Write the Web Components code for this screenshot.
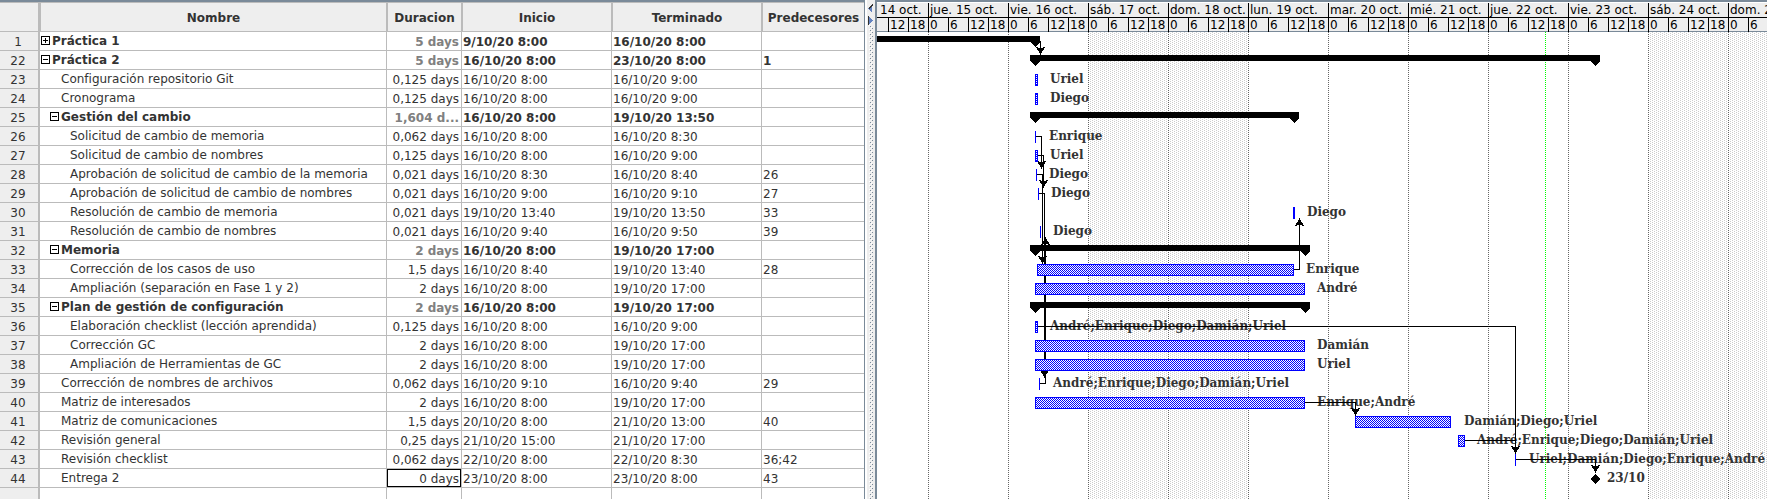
<!DOCTYPE html>
<html lang="es">
<head>
<meta charset="utf-8">
<meta name="viewport" content="width=device-width, initial-scale=1">
<title>Cronograma</title>
<style>
  html, body { margin: 0; height: 100%; }
  body { font: 12px/14px "DejaVu Sans", sans-serif; color: #333; background: #fff; overflow: hidden; }
</style>
</head>
<body>
<project-view>
  <task-sheet slot="sheet"></task-sheet>
  <gantt-chart slot="chart"></gantt-chart>
</project-view>

<script>
/* id, level, name, duration, start, end, predecessors, summary state */
const TASKS = [
  [1, 0, 'Práctica 1', '5 days', '9/10/20 8:00', '16/10/20 8:00', '', 'closed'],
  [22, 0, 'Práctica 2', '5 days', '16/10/20 8:00', '23/10/20 8:00', '1', 'open'],
  [23, 1, 'Configuración repositorio Git', '0,125 days', '16/10/20 8:00', '16/10/20 9:00', ''],
  [24, 1, 'Cronograma', '0,125 days', '16/10/20 8:00', '16/10/20 9:00', ''],
  [25, 1, 'Gestión del cambio', '1,604 d...', '16/10/20 8:00', '19/10/20 13:50', '', 'open'],
  [26, 2, 'Solicitud de cambio de memoria', '0,062 days', '16/10/20 8:00', '16/10/20 8:30', ''],
  [27, 2, 'Solicitud de cambio de nombres', '0,125 days', '16/10/20 8:00', '16/10/20 9:00', ''],
  [28, 2, 'Aprobación de solicitud de cambio de la memoria', '0,021 days', '16/10/20 8:30', '16/10/20 8:40', '26'],
  [29, 2, 'Aprobación de solicitud de cambio de nombres', '0,021 days', '16/10/20 9:00', '16/10/20 9:10', '27'],
  [30, 2, 'Resolución de cambio de memoria', '0,021 days', '19/10/20 13:40', '19/10/20 13:50', '33'],
  [31, 2, 'Resolución de cambio de nombres', '0,021 days', '16/10/20 9:40', '16/10/20 9:50', '39'],
  [32, 1, 'Memoria', '2 days', '16/10/20 8:00', '19/10/20 17:00', '', 'open'],
  [33, 2, 'Corrección de los casos de uso', '1,5 days', '16/10/20 8:40', '19/10/20 13:40', '28'],
  [34, 2, 'Ampliación (separación en Fase 1 y 2)', '2 days', '16/10/20 8:00', '19/10/20 17:00', ''],
  [35, 1, 'Plan de gestión de configuración', '2 days', '16/10/20 8:00', '19/10/20 17:00', '', 'open'],
  [36, 2, 'Elaboración checklist (lección aprendida)', '0,125 days', '16/10/20 8:00', '16/10/20 9:00', ''],
  [37, 2, 'Corrección GC', '2 days', '16/10/20 8:00', '19/10/20 17:00', ''],
  [38, 2, 'Ampliación de Herramientas de GC', '2 days', '16/10/20 8:00', '19/10/20 17:00', ''],
  [39, 1, 'Corrección de nombres de archivos', '0,062 days', '16/10/20 9:10', '16/10/20 9:40', '29'],
  [40, 1, 'Matriz de interesados', '2 days', '16/10/20 8:00', '19/10/20 17:00', ''],
  [41, 1, 'Matriz de comunicaciones', '1,5 days', '20/10/20 8:00', '21/10/20 13:00', '40'],
  [42, 1, 'Revisión general', '0,25 days', '21/10/20 15:00', '21/10/20 17:00', ''],
  [43, 1, 'Revisión checklist', '0,062 days', '22/10/20 8:00', '22/10/20 8:30', '36;42'],
  [44, 1, 'Entrega 2', '0 days', '23/10/20 8:00', '23/10/20 8:00', '43']
];
const ROW = 19;
const rowOf = id => TASKS.findIndex(t => t[0] === id);

function mount(el, html) {
  const root = el.shadowRoot || el.attachShadow({ mode: 'open' });
  const t = document.createElement('template');
  t.innerHTML = html;
  root.replaceChildren(t.content.cloneNode(true));
  return root;
}

customElements.define('tree-toggle', class extends HTMLElement {
  connectedCallback() {
    const open = this.hasAttribute('open');
    mount(this, `
      <style>
        :host { display: block; width: 9px; height: 9px; }
        button { display: block; width: 9px; height: 9px; padding: 0; border: 0; background: none; }
        svg { display: block; }
      </style>
      <button type="button" aria-expanded="${open}">
        <svg width="9" height="9" shape-rendering="crispEdges" fill="none" stroke="#000">
          <path d="M.5 .5h8v8h-8zM2 4.5h5${open ? '' : 'M4.5 2v5'}"/>
        </svg>
      </button>`);
  }
});

customElements.define('task-name', class extends HTMLElement {
  connectedCallback() {
    mount(this, `
      <style>
        :host { display: flex; align-items: flex-start; gap: 2px; height: 16px; padding-top: 2px;
                padding-left: calc(var(--level, 0) * 9px + 1px); }
        :host([leaf]) { padding-left: calc(var(--level, 0) * 9px + 12px); }
        ::slotted(tree-toggle) { margin-top: 2px; }
      </style>
      <slot name="toggle"></slot><span><slot></slot></span>`);
  }
});

customElements.define('task-sheet', class extends HTMLElement {
  connectedCallback() {
    const rows = TASKS.map(([id, lv, name, dur, a, b, pred, sum]) => `
      <tr class="${sum ? 'sum' : ''}">
        <th scope="row">${id}</th>
        <td><task-name style="--level:${lv}" ${sum ? '' : 'leaf'}>${
          sum ? `<tree-toggle slot="toggle" ${sum === 'open' ? 'open' : ''}></tree-toggle>` : ''}${name}</task-name></td>
        <td class="dur${id === 44 ? ' sel' : ''}">${dur}</td><td>${a}</td><td>${b}</td><td>${pred}</td>
      </tr>`).join('');
    mount(this, `
      <style>
        :host { display: block; height: 100%; }
        table { table-layout: fixed; width: 864px; height: 100%; border-spacing: 0; }
        .id { width: 40px; } .name { width: 347px; } .d { width: 75px; } .date { width: 150px; } .pred { width: 102px; }
        th, td { box-sizing: border-box; height: 19px; padding: 0; white-space: nowrap; overflow: hidden;
                 border-bottom: 1px solid #bbb; border-right: 1px solid #bbb; }
        td { text-align: left; padding: 2px 0 0 1px; }
        td:nth-child(2) { padding: 0; }
        th:last-child, td:last-child { border-right: 0; }
        thead th { height: 30px; padding-top: 1px; background: #eee; border-top: 1px solid #bbb; border-left: 1px solid #bbb; }
        thead th:first-child { border-left: 0; }
        th:first-child { border-right: 2px solid #bbb; background: #eee; }
        tbody th { font-weight: normal; padding: 2px 2px 0 0; }
        .sum td { font-weight: bold; }
        .dur { text-align: right; padding-right: 2px; }
        .sum .dur { color: #808080; }
        .sel { box-shadow: inset 0 0 0 1px #000; }
        .rest th, .rest td { height: auto; border-bottom: 0; }
        .rest { height: 100%; }
      </style>
      <table>
        <colgroup><col class="id"><col class="name"><col class="d"><col class="date"><col class="date"><col class="pred"></colgroup>
        <thead><tr><th></th><th scope="col">Nombre</th><th scope="col">Duracion</th><th scope="col">Inicio</th><th scope="col">Terminado</th><th scope="col">Predecesores</th></tr></thead>
        <tbody>${rows}<tr class="rest"><th></th><td></td><td></td><td></td><td></td><td></td></tr></tbody>
      </table>`);
  }
});

customElements.define('split-divider', class extends HTMLElement {
  connectedCallback() {
    mount(this, `
      <style>
        :host { display: flex; flex-direction: column; box-sizing: border-box; width: 13px; padding-left: 2px;
                border-left: 1px solid #7a8a99; border-right: 2px solid #7a8a99; background: #fff; }
        svg { display: block; flex: none; background: #eee; }
        svg.bumps { flex: 1; min-height: 0; }
      </style>
      <svg width="8" height="25" fill="#6382bf" shape-rendering="crispEdges">
        <path d="M5 4v9L1 8.500z"/><path d="M5 4h1v2H5zM4 5h1v2H4zM3 6h1v2H3zM2 7h1v2H2z" fill="#333"/>
        <path d="M1 16v9l5-4.500z"/><path d="M1 16h1v9H1z" fill="#333"/>
      </svg>
      <svg class="bumps" width="8">
        <defs><pattern id="b" width="4" height="4" patternUnits="userSpaceOnUse" shape-rendering="crispEdges">
          <path d="M2 0h1v1H2zM0 2h1v1H0z" fill="#fff"/><path d="M3 1h1v1H3zM1 3h1v1H1z" fill="#7a8a99"/>
        </pattern></defs>
        <rect x="2" width="4" height="100%" fill="url(#b)"/>
      </svg>`);
  }
});

/* The time scale starts on Wednesday 14 October; a day takes 80px. */
const DAY = 80;
const WEEK = ['dom.', 'lun.', 'mar.', 'mié.', 'jue.', 'vie.', 'sáb.'];
const dayAt = i => new Date(2020, 9, 14 + i);

customElements.define('time-scale', class extends HTMLElement {
  connectedCallback() {
    const n = +this.getAttribute('days');
    let days = '';
    for (let i = 0; i < n; i++) {
      const d = dayAt(i);
      /* the first day is scrolled past 6:00, so its first two hour marks stay empty */
      const hours = i ? [0, 6, 12, 18] : ['', '', 12, 18];
      days += `<div class="day"><div class="date">${WEEK[d.getDay()]} ${d.getDate()} oct.</div>
        <div class="hours">${hours.map(h => `<span>${h}</span>`).join('')}</div></div>`;
    }
    mount(this, `
      <style>
        :host { display: flex; color: #000; background: #eee; border-top: 1px solid #fff; border-bottom: 1px solid #7a8a99; }
        .day { flex: none; width: 80px; white-space: nowrap; }
        .date { height: 14px; padding-left: 1px; border-left: 1px solid #000; border-bottom: 1px solid #000; }
        .hours { display: grid; grid-template-columns: repeat(4, 20px); height: 13px; line-height: 14px; }
        .hours span { padding-left: 1px; border-left: 1px solid #000; }
      </style>${days}`);
  }
});

/* task id, start x, end x, label x, label */
const BARS = [
  [23, 187, 190, 202, 'Uriel'], [24, 187, 190, 202, 'Diego'],
  [26, 187, 188, 201, 'Enrique'], [27, 187, 190, 202, 'Uriel'],
  [28, 188, 189, 201, 'Diego'], [29, 190, 191, 203, 'Diego'],
  [30, 445, 447, 459, 'Diego'], [31, 192, 193, 205, 'Diego'],
  [33, 189, 446, 458, 'Enrique'], [34, 187, 457, 469, 'André'],
  [36, 187, 190, 202, 'André;Enrique;Diego;Damián;Uriel'],
  [37, 187, 457, 469, 'Damián'], [38, 187, 457, 469, 'Uriel'],
  [39, 191, 192, 205, 'André;Enrique;Diego;Damián;Uriel'],
  [40, 187, 457, 469, 'Enrique;André'], [41, 507, 603, 616, 'Damián;Diego;Uriel'],
  [42, 610, 617, 629, 'André;Enrique;Diego;Damián;Uriel'],
  [43, 667, 668, 681, 'Uriel;Damián;Diego;Enrique;André']
];
const SUMMARIES = [[1, -200, 187], [22, 187, 747], [25, 187, 446], [32, 187, 457], [35, 187, 457]];
/* from task, to task, start x, turn x */
const LINKS = [
  [26, 28, 188, 193], [27, 29, 190, 195], [28, 33, 189, 194], [29, 39, 191, 196],
  [39, 31, 192, 197], [33, 30, 446, 451], [36, 43, 190, 667], [40, 41, 457, 507],
  [42, 43, 617, 667], [43, 44, 668, 747]
];

customElements.define('gantt-chart', class extends HTMLElement {
  connectedCallback() {
    this.draw();
    addEventListener('resize', () => this.draw());
  }
  draw() {
    const n = Math.ceil((this.clientWidth + 29) / DAY) || 12;
    let back = '', grid = '', labels = '', links = '', bars = '';
    for (let i = 0; i < n; i++) {
      if (dayAt(i).getDay() % 6 === 0) back += `<rect x="${i * DAY}" width="${DAY}" height="100%" fill="url(#rest)"/>`;
      grid += `<rect x="${i * DAY}" width="1" height="100%" fill="url(#dots)"/>`;
    }
    grid += `<rect x="697" width="1" height="100%" fill="url(#now)"/>`;
    for (const [id, a, b, lx, text] of BARS) {
      const y = rowOf(id) * ROW;
      labels += `<text x="${lx}" y="${y + 13}">${text}</text>`;
      bars += `<rect x="${a}" y="${y + 4}" width="${b - a}" height="12" fill="#00f"/>`;
      if (b - a > 2) bars += `<rect x="${a + 1}" y="${y + 5}" width="${b - a - 2}" height="10" fill="url(#fill)"/>`;
    }
    for (const [id, a, b] of SUMMARIES) {
      const y = rowOf(id) * ROW + 4;
      bars += `<path d="M${a - 5} ${y}H${b + 5}V${y + 6}L${b} ${y + 11}L${b - 5} ${y + 6}H${a + 5}L${a} ${y + 11}L${a - 5} ${y + 6}z"/>`;
    }
    for (const [from, to, x, turn] of LINKS) {
      const y = rowOf(from) * ROW + 9;
      const down = rowOf(to) > rowOf(from);
      const end = rowOf(to) * ROW + (down ? 4 : 15);
      const s = down ? -1 : 1;
      links += `<path d="M${x} ${y}.500H${turn}.500V${end}" fill="none" stroke="#000"/>`;
      links += `<path d="M${turn}.500 ${end}l-5 ${9 * s}l5 ${-3 * s}l5 ${3 * s}z"/>`;
    }
    links += `<path d="M192.500 9V23" fill="none" stroke="#000"/><path d="M192.500 23l-5 -9l5 3l5 -3z"/>`;
    const my = rowOf(44) * ROW;
    labels += `<text x="759" y="${my + 13}">23/10</text>`;
    bars += `<path d="M747 ${my + 5}l5 5l-5 5l-5 -5z"/>`;

    mount(this, `
      <style>
        :host { display: flex; flex-direction: column; height: 100%; overflow: hidden; background: #fff; }
        time-scale, svg { flex: none; margin-left: -29px; }
        svg { display: block; flex: 1; min-height: 0; width: calc(100% + 29px); }
        text { font: bold 12px "DejaVu Serif", serif; fill: #333; }
      </style>
      <time-scale days="${n}"></time-scale>
      <svg shape-rendering="crispEdges">
        <defs>
          <pattern id="rest" width="4" height="4" patternUnits="userSpaceOnUse"><path d="M0 0h1v1H0zM2 1h1v1H2zM0 2h1v1H0zM2 3h1v1H2z" fill="#ccc"/></pattern>
          <pattern id="dots" width="1" height="2" patternUnits="userSpaceOnUse"><rect width="1" height="1" fill="#666"/></pattern>
          <pattern id="now" width="1" height="2" patternUnits="userSpaceOnUse"><rect width="1" height="1" fill="#0f0"/></pattern>
          <pattern id="fill" width="2" height="2" patternUnits="userSpaceOnUse"><rect width="2" height="2" fill="#fff"/><path d="M0 0h1v1H0zM1 1h1v1H1z" fill="#00f"/></pattern>
        </defs>
        ${back}${grid}${labels}${links}${bars}
      </svg>`);
  }
});

customElements.define('project-view', class extends HTMLElement {
  connectedCallback() {
    mount(this, `
      <style>
        :host { display: flex; height: 100vh; }
        .pane { box-sizing: border-box; height: 100%; overflow: hidden; border-top: 2px solid #7a8a99; }
        .sheet { flex: none; }
        .chart { flex: 1; min-width: 0; }
      </style>
      <section class="pane sheet"><slot name="sheet"></slot></section>
      <split-divider></split-divider>
      <section class="pane chart"><slot name="chart"></slot></section>`);
    this.querySelector('gantt-chart').draw?.();
  }
});
</script>
</body>
</html>
